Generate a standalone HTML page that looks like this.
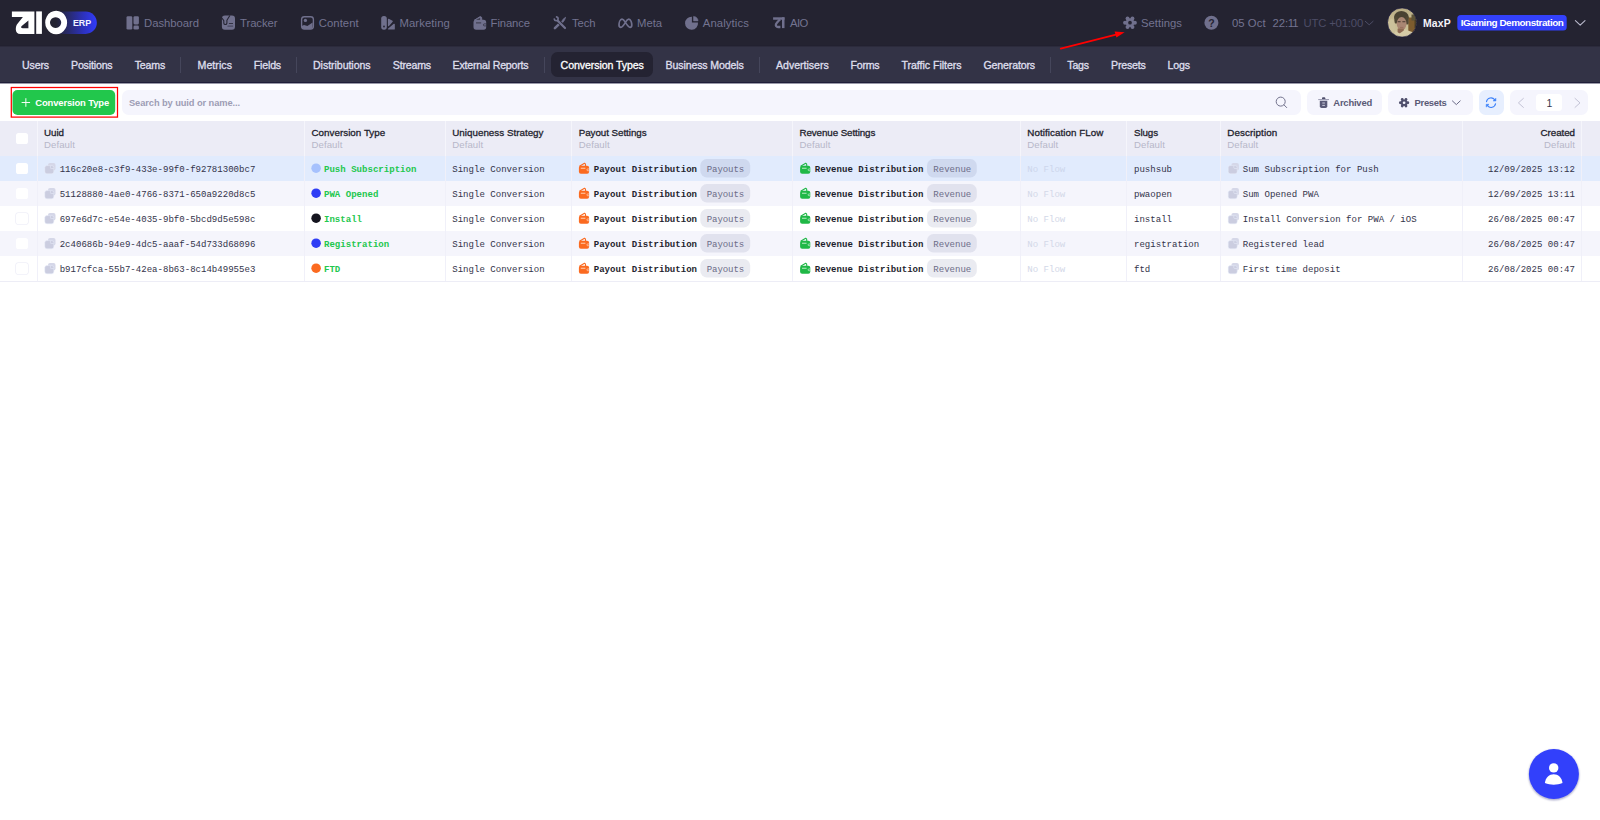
<!DOCTYPE html>
<html lang="en">
<head>
<meta charset="utf-8">
<title>Conversion Types</title>
<style>
*{box-sizing:border-box;margin:0;padding:0}
html,body{width:1600px;height:820px;overflow:hidden;background:#fff}
body{position:relative;font-family:"Liberation Sans",sans-serif;color:#1f1f2e}
svg{position:absolute;overflow:visible}
.t{position:absolute;white-space:pre;z-index:6}
.q{position:absolute;left:1208.3px;top:17.2px;font:bold 10.5px "Liberation Sans",sans-serif;color:#242331;z-index:7;line-height:12px}
#top{position:absolute;left:0;top:0;width:1600px;height:46px;background:#242331}
#sub{position:absolute;left:0;top:45px;width:1600px;height:39px;background:linear-gradient(#222130 0,#222130 1px,#2c2b3c 1px,#2c2b3c 2px,#333346 2px,#333346 37px,#1f1e38 37px,#1f1e38 38px,#9a9aa8 38px,#9a9aa8 39px)}
#sub i{position:absolute;top:12px;width:1px;height:16px;background:#45465b}
#sub b{position:absolute;left:551px;top:7px;width:102px;height:25px;border-radius:6.5px;background:#242332}
.pill{position:absolute;top:90.2px;height:24.7px;border-radius:6.5px;background:#f5f5fd}
#thead{position:absolute;left:0;top:121px;width:1600px;height:35px;background:#ececf6}
.row{position:absolute;left:0;width:1600px;height:25px}
.vs{position:absolute;top:121px;width:1.2px;height:35px;background:#f5f5fb;z-index:2}
.vb{position:absolute;top:156px;width:1.2px;height:125px;background:#f0f0f9;z-index:2}
.cb{position:absolute;left:16.4px;width:11.2px;height:11.1px;border-radius:2.6px;background:#fff;z-index:2}
.cbw{box-shadow:0 0 0 0.8px #efeff8}
.n{font:normal 11.3px "Liberation Sans",sans-serif;color:#737390}
.nb{font:bold 10.4px "Liberation Sans",sans-serif;}
.bd{font:bold 9.9px "Liberation Sans",sans-serif;}
.erp{font:bold 8.9px "Liberation Sans",sans-serif;}
.s{font:normal 10.6px "Liberation Sans",sans-serif;color:#dedeec;-webkit-text-stroke:0.33px #dedeec}
.hl{font:normal 9.8px "Liberation Sans",sans-serif;color:#1f1f2e;-webkit-text-stroke:0.3px #1f1f2e}
.hd{font:normal 9.6px "Liberation Sans",sans-serif;color:#b7b7c9}
.b{font:bold 9.45px "Liberation Sans",sans-serif;}
.ph{font:bold 9.3px "Liberation Sans",sans-serif;}
.pg{font:normal 10.5px "Liberation Sans",sans-serif;}
.m{font:normal 9.05px "Liberation Mono",monospace;color:#33334a}
.mb{font:bold 9.05px "Liberation Mono",monospace;}
</style>
</head>
<body>
<div id="top"></div>
<div id="sub"><b></b><i style="left:180px"></i><i style="left:295.8px"></i><i style="left:544.1px"></i><i style="left:759.2px"></i><i style="left:1050.2px"></i></div>
<div class="pill" style="left:122.3px;width:1178.7px"></div>
<div class="pill" style="left:1307.3px;width:74.4px"></div>
<div class="pill" style="left:1388px;width:84.5px"></div>
<div class="pill" style="left:1479px;width:24.9px;background:#e7effe"></div>
<div class="pill" style="left:1510.2px;width:78.1px"></div>
<div style="position:absolute;left:1535.7px;top:94.1px;width:26.6px;height:16.8px;border-radius:3.5px;background:#fff"></div>
<div id="thead"></div>
<div class="row" style="top:156px;background:#e1ebfd"></div>
<div class="row" style="top:181px;background:#f5f5fc"></div>
<div class="row" style="top:206px;background:#fff"></div>
<div class="row" style="top:231px;background:#f5f5fc"></div>
<div class="row" style="top:256px;background:#fff;box-shadow:0 1px 0 #ededf6"></div>
<div class="vs" style="left:36.5px"></div><div class="vb" style="left:36.5px"></div>
<div class="vs" style="left:304.2px"></div><div class="vb" style="left:304.2px"></div>
<div class="vs" style="left:444.9px"></div><div class="vb" style="left:444.9px"></div>
<div class="vs" style="left:571.2px"></div><div class="vb" style="left:571.2px"></div>
<div class="vs" style="left:792px"></div><div class="vb" style="left:792px"></div>
<div class="vs" style="left:1019.8px"></div><div class="vb" style="left:1019.8px"></div>
<div class="vs" style="left:1126.3px"></div><div class="vb" style="left:1126.3px"></div>
<div class="vs" style="left:1219.8px"></div><div class="vb" style="left:1219.8px"></div>
<div class="vs" style="left:1461.6px"></div><div class="vb" style="left:1461.6px"></div>
<div class="vs" style="left:1580.8px"></div><div class="vb" style="left:1580.8px"></div>
<div class="cb" style="top:133.4px"></div>
<div class="cb" style="top:162.6px"></div>
<div class="cb" style="top:187.6px"></div>
<div class="cb cbw" style="top:212.6px"></div>
<div class="cb" style="top:237.6px"></div>
<div class="cb cbw" style="top:262.6px"></div>
<svg style="left:0;top:0" width="110" height="46" viewBox="0 0 110 46"><defs><linearGradient id="lg" x1="0" x2="1"><stop offset="0" stop-color="#242331"/><stop offset=".3" stop-color="#282a6c"/><stop offset=".65" stop-color="#2c31b8"/><stop offset="1" stop-color="#313bfa"/></linearGradient></defs><path d="M56,11.4H85.6a11.25,11.25 0 0 1 0,22.5H56Z" fill="url(#lg)"/><path transform="translate(11.9,11.4)" d="M0,0H22.5V22.5H8.5C5.5,22.5 3.9,20.5 3.9,18C3.9,15.5 4.3,13.8 5.8,12L11,5.7H0ZM16.5,9V16.8H11C9,16.8 8.8,15.6 9.8,14.6Z" fill="#fff" fill-rule="evenodd"/><rect x="36.2" y="11.4" width="5.7" height="22.5" fill="#fff"/><path fill-rule="evenodd" fill="#fff" d="M56.15,10.8a10.95,11.7 0 1 0 .01,0ZM55.6,17.3a5.6,5.3 0 1 0 .01,0Z"/></svg>
<svg style="left:0;top:0;z-index:5" width="1600" height="60" viewBox="0 0 1600 60"><rect x="126.5" y="16.2" width="5.8" height="13.3" rx="1.3" fill="#70708d"/><rect x="133.5" y="16.2" width="5.4" height="8.2" rx="1.3" fill="#70708d"/><rect x="133.5" y="25.6" width="5.4" height="3.9" rx="1.3" fill="#70708d"/><rect x="221.9" y="15.5" width="13.1" height="14.2" rx="3" fill="#70708d"/><path d="M229.9,15.4L226.9,20.3V23.1Q226.8,24.5 225.4,24.5Q223.9,24.5 223.8,23.1V20.6L221.7,17.7" fill="none" stroke="#242331" stroke-width="1.05" stroke-linejoin="round"/><path d="M229.3,23.5H232.6" stroke="#242331" stroke-width="0.8" stroke-linecap="round"/><path d="M228,26.2H232.6" stroke="#4a4a62" stroke-width="1.3" stroke-linecap="round"/><rect x="301.6" y="16.7" width="11.8" height="12.4" rx="2.8" fill="none" stroke="#70708d" stroke-width="1.35"/><circle cx="305.4" cy="20.4" r="1.65" fill="#70708d"/><path d="M301.8,26L304,25L307.4,26L312.6,22.6V27Q312.6,29 310.6,29H304Q301.8,29 301.8,27Z" fill="#70708d"/><rect x="381.2" y="16" width="5.6" height="13.7" rx="2.6" fill="#70708d"/><circle cx="384" cy="26.5" r="0.9" fill="#242331"/><path d="M388.5,19.4L392.2,21.3L388.5,25.6Z" fill="#70708d" stroke="#70708d" stroke-width="1.2" stroke-linejoin="round"/><path d="M388.6,29L394.2,24.3V29Z" fill="#70708d" stroke="#70708d" stroke-width="1.2" stroke-linejoin="round"/><rect x="473.5" y="19.8" width="12.7" height="9.9" rx="2.6" fill="#70708d"/><path d="M474.3,20.2L480.2,16.6L481.6,17.3L481.8,20.2Z" fill="#70708d" stroke="#70708d" stroke-width="1" stroke-linejoin="round"/><path d="M476,19.7L480.1,18.1V19.7Z" fill="#242331" opacity=".85"/><path d="M476.4,22.9H480.8" stroke="#242331" stroke-width="1" stroke-linecap="round" opacity=".75"/><path d="M486.2,23.9H484.4a1,1 0 0 0 0,2H486.2" fill="none" stroke="#242331" stroke-width="0.8" opacity=".8"/><path d="M554.9,28.2L558.8,24.3" stroke="#70708d" stroke-width="2.5" stroke-linecap="round"/><path d="M557.6,20.6L565,28" stroke="#242331" stroke-width="3.6" stroke-linecap="round"/><path d="M557.6,20.6L565,28" stroke="#70708d" stroke-width="2.2" stroke-linecap="round"/><path d="M556.6,16.9A1.95,1.95 0 1 1 554.3,19.2" fill="none" stroke="#70708d" stroke-width="1.7" stroke-linecap="round"/><path d="M561.7,21.4Q562.6,19 565.6,17.3Q565.1,19.8 562.7,22.4Z" fill="#70708d" stroke="#70708d" stroke-width="0.8" stroke-linejoin="round"/><path d="M625.4,22.4C624.3,20.5 623.3,19.1 622,19.2C620,19.4 619,22.8 619,25C619,26.5 619.8,27.3 620.9,27.3C622.5,27.3 623.8,25.2 625.4,22.4C626.5,20.4 627.5,19.2 628.8,19.2C630.8,19.2 631.8,22.8 631.8,25C631.8,26.5 631.2,27.3 630.1,27.3C628.5,27.3 627,25 625.4,22.4Z" fill="none" stroke="#70708d" stroke-width="1.7" stroke-linejoin="round"/><path d="M691.9,16.75A6.5,6.5 0 1 0 698,22.5L691.9,22.5Z" fill="#70708d"/><path d="M693.5,16.4A4.6,4.6 0 0 1 698.1,20.9L693.5,20.9Z" fill="#70708d" stroke="#70708d" stroke-width="0.5" stroke-linejoin="round"/><rect x="773.1" y="17.3" width="11.4" height="2.45" fill="#70708d"/><rect x="782" y="17.3" width="2.5" height="10.8" fill="#70708d"/><path d="M780,19.4C778.5,21 776.6,22.6 776,24.2C775.5,25.8 776.3,27 778,27L780.4,27" fill="none" stroke="#70708d" stroke-width="2.3"/><circle cx="1130" cy="22.7" r="4.37" fill="#70708d"/><circle cx="1134.92" cy="22.70" r="1.98" fill="#70708d"/><circle cx="1132.46" cy="26.96" r="1.98" fill="#70708d"/><circle cx="1127.54" cy="26.96" r="1.98" fill="#70708d"/><circle cx="1125.08" cy="22.70" r="1.98" fill="#70708d"/><circle cx="1127.54" cy="18.44" r="1.98" fill="#70708d"/><circle cx="1132.46" cy="18.44" r="1.98" fill="#70708d"/><circle cx="1130" cy="22.7" r="1.85" fill="#242331"/><circle cx="1211.4" cy="22.8" r="7" fill="#70708d"/><path d="M1365.3,21.3L1369.2,24.8L1373.1,21.3" fill="none" stroke="#4d4d66" stroke-width="1" stroke-linecap="round" stroke-linejoin="round"/><path d="M1575.4,20.6L1580.2,25.2L1585,20.6" fill="none" stroke="#b9b9cc" stroke-width="1.1" stroke-linecap="round" stroke-linejoin="round"/><rect x="1457.3" y="14.9" width="109.4" height="15.7" rx="3.5" fill="#3341fb"/><defs><clipPath id="av"><circle cx="1402.1" cy="22.5" r="14.5"/></clipPath><filter id="bl" x="-20%" y="-20%" width="140%" height="140%"><feGaussianBlur stdDeviation="0.65"/></filter><linearGradient id="avb" x1="0" x2="0" y1="0" y2="1"><stop offset="0" stop-color="#b5a981"/><stop offset=".45" stop-color="#c7bb93"/><stop offset="1" stop-color="#cdc39d"/></linearGradient></defs><g clip-path="url(#av)"><rect x="1386" y="6" width="33" height="33" fill="url(#avb)"/><g filter="url(#bl)"><rect x="1408.3" y="17.5" width="10" height="15.5" fill="#7d5c2e"/><rect x="1411.5" y="14.5" width="6" height="6" fill="#5b5238"/><rect x="1414.5" y="20" width="3" height="8" fill="#4b4028"/><ellipse cx="1401.4" cy="17" rx="7.3" ry="6" fill="#4a4333"/><rect x="1394.4" y="16" width="3.4" height="7.5" rx="1.5" fill="#4f4634"/><rect x="1405.6" y="16" width="3" height="8.5" rx="1.5" fill="#4f4634"/><ellipse cx="1401.6" cy="23.6" rx="4.9" ry="6.6" fill="#a98673"/><rect x="1397.6" y="28.6" width="6.2" height="5" fill="#8f6b52"/><rect x="1397.6" y="21" width="3" height="1.3" fill="#5e4b40"/><rect x="1402.4" y="21" width="3" height="1.3" fill="#5e4b40"/><rect x="1400" y="26.9" width="3.4" height="1" fill="#9a6f60"/><path d="M1392,39L1395.6,31L1399.6,33.6L1405.2,29.4L1412.8,32.2L1417,39Z" fill="#d5cba6"/><ellipse cx="1391.5" cy="27" rx="3.6" ry="8" fill="#cbc19b"/></g></g><circle cx="1402.1" cy="22.5" r="14.6" fill="none" stroke="#15143a" stroke-width="0.9" opacity=".75"/><path d="M1060.7,48.6L1117,34.4" stroke="#ff0000" stroke-width="1.6" stroke-linecap="round"/><path d="M1124.6,32.2L1114.6,31.6L1116.4,37.6Z" fill="#ff0000"/></svg>
<svg style="left:0;top:84px;z-index:4" width="1600" height="36" viewBox="0 84 1600 36"><rect x="11.3" y="87.5" width="106.2" height="29.6" fill="none" stroke="#ff0000" stroke-width="1.25"/><rect x="12.5" y="90" width="102.7" height="25" rx="5" fill="#22c74c"/><path d="M22,102.5H29.7M25.85,98.6V106.4" stroke="#fff" stroke-width="0.95" stroke-linecap="round"/><circle cx="1280.7" cy="101.6" r="4.5" fill="none" stroke="#6b6b87" stroke-width="0.95"/><path d="M1284,104.9L1286.7,107.6" stroke="#6b6b87" stroke-width="0.95" stroke-linecap="round"/><path d="M1322,99.3V98.2Q1322,97.2 1323,97.2H1324.3Q1325.3,97.2 1325.3,98.2V99.3Z" fill="#4f4f6b"/><path d="M1318.6,99.6H1328.6" stroke="#9797ae" stroke-width="1" stroke-linecap="round"/><path d="M1319.8,100.7H1327.3V106.3Q1327.3,108.1 1325.5,108.1H1321.6Q1319.8,108.1 1319.8,106.3Z" fill="#5a5a77"/><path d="M1322.3,103H1324.9M1322.3,105.4H1324.9" stroke="#d9d9e8" stroke-width="0.9"/><circle cx="1404.1" cy="102.75" r="3.32" fill="#4f4f6c"/><circle cx="1407.84" cy="102.75" r="1.40" fill="#4f4f6c"/><circle cx="1405.97" cy="105.99" r="1.40" fill="#4f4f6c"/><circle cx="1402.23" cy="105.99" r="1.40" fill="#4f4f6c"/><circle cx="1400.36" cy="102.75" r="1.40" fill="#4f4f6c"/><circle cx="1402.23" cy="99.51" r="1.40" fill="#4f4f6c"/><circle cx="1405.97" cy="99.51" r="1.40" fill="#4f4f6c"/><circle cx="1404.1" cy="102.75" r="1.35" fill="#f5f5fd"/><path d="M1452.4,100.9L1456.3,104.6L1460.2,100.9" fill="none" stroke="#6b6b87" stroke-width="1" stroke-linecap="round" stroke-linejoin="round"/><path d="M1486.5,101.6A4.6,4.6 0 0 1 1494.6,99.6" fill="none" stroke="#3d82fa" stroke-width="1.1" stroke-linecap="round"/><path d="M1495.9,98.2V101H1493.1Z" fill="#3d82fa" stroke="#3d82fa" stroke-width="0.5" stroke-linejoin="round"/><path d="M1495.6,103.7A4.6,4.6 0 0 1 1487.5,105.7" fill="none" stroke="#3d82fa" stroke-width="1.1" stroke-linecap="round"/><path d="M1486.2,107.1V104.3H1489Z" fill="#3d82fa" stroke="#3d82fa" stroke-width="0.5" stroke-linejoin="round"/><path d="M1523.4,98.4L1518.4,102.9L1523.4,107.4" fill="none" stroke="#c4c4d6" stroke-width="1" stroke-linecap="round" stroke-linejoin="round"/><path d="M1575,98.4L1580,102.9L1575,107.4" fill="none" stroke="#c4c4d6" stroke-width="1" stroke-linecap="round" stroke-linejoin="round"/></svg>
<svg style="left:0;top:156px;z-index:3" width="1600" height="125" viewBox="0 156 1600 125"><g transform="translate(44.8,163.1)"><rect x="3.2" y="0" width="7.5" height="7.4" rx="2" fill="#d5d7e8"/><rect x="0" y="2.5" width="9" height="8.2" rx="2" fill="#cbcde0" stroke="#e9eefb" stroke-width="0.5"/><path d="M5.6,2.7V4.6a0.8,0.8 0 0 0 .8,.8H8.8" fill="none" stroke="#e2e5f3" stroke-width="0.7"/></g><g transform="translate(1228.2,163.1)"><rect x="3.2" y="0" width="7.5" height="7.4" rx="2" fill="#d5d7e8"/><rect x="0" y="2.5" width="9" height="8.2" rx="2" fill="#cbcde0" stroke="#e9eefb" stroke-width="0.5"/><path d="M5.6,2.7V4.6a0.8,0.8 0 0 0 .8,.8H8.8" fill="none" stroke="#e2e5f3" stroke-width="0.7"/></g><circle cx="316.1" cy="168.2" r="4.75" fill="#a6c1fd"/><rect x="700.3" y="159.1" width="49.9" height="18.3" rx="6.5" fill="rgba(95,100,150,0.13)"/><rect x="927" y="159.1" width="49.8" height="18.3" rx="6.5" fill="rgba(95,100,150,0.13)"/><g transform="translate(578.9,162.75) scale(1)"><rect x="0" y="3.1" width="10.2" height="7.8" rx="2" fill="#fb6a20"/><path d="M0.9,3.3L5.6,0.55L6.5,1.1L6.7,3.3" fill="none" stroke="#fb6a20" stroke-width="1.1" stroke-linejoin="round" stroke-linecap="round"/><path d="M2.3,5.5H6.1" stroke="#ffd9c2" stroke-width="0.9" stroke-linecap="round"/><path d="M10.2,6.2H8.9a0.9,0.9 0 0 0 0,1.8H10.2" fill="none" stroke="#ffd9c2" stroke-width="0.7"/></g><g transform="translate(800.1,162.75) scale(1)"><rect x="0" y="3.1" width="10.2" height="7.8" rx="2" fill="#1fb846"/><path d="M0.9,3.3L5.6,0.55L6.5,1.1L6.7,3.3" fill="none" stroke="#1fb846" stroke-width="1.1" stroke-linejoin="round" stroke-linecap="round"/><path d="M2.3,5.5H6.1" stroke="#c9f1d3" stroke-width="0.9" stroke-linecap="round"/><path d="M10.2,6.2H8.9a0.9,0.9 0 0 0 0,1.8H10.2" fill="none" stroke="#c9f1d3" stroke-width="0.7"/></g><g transform="translate(44.8,188.1)"><rect x="3.2" y="0" width="7.5" height="7.4" rx="2" fill="#d5d7e8"/><rect x="0" y="2.5" width="9" height="8.2" rx="2" fill="#cbcde0" stroke="#e9eefb" stroke-width="0.5"/><path d="M5.6,2.7V4.6a0.8,0.8 0 0 0 .8,.8H8.8" fill="none" stroke="#e2e5f3" stroke-width="0.7"/></g><g transform="translate(1228.2,188.1)"><rect x="3.2" y="0" width="7.5" height="7.4" rx="2" fill="#d5d7e8"/><rect x="0" y="2.5" width="9" height="8.2" rx="2" fill="#cbcde0" stroke="#e9eefb" stroke-width="0.5"/><path d="M5.6,2.7V4.6a0.8,0.8 0 0 0 .8,.8H8.8" fill="none" stroke="#e2e5f3" stroke-width="0.7"/></g><circle cx="316.1" cy="193.2" r="4.75" fill="#2f3df5"/><rect x="700.3" y="184.1" width="49.9" height="18.3" rx="6.5" fill="rgba(95,100,150,0.13)"/><rect x="927" y="184.1" width="49.8" height="18.3" rx="6.5" fill="rgba(95,100,150,0.13)"/><g transform="translate(578.9,187.75) scale(1)"><rect x="0" y="3.1" width="10.2" height="7.8" rx="2" fill="#fb6a20"/><path d="M0.9,3.3L5.6,0.55L6.5,1.1L6.7,3.3" fill="none" stroke="#fb6a20" stroke-width="1.1" stroke-linejoin="round" stroke-linecap="round"/><path d="M2.3,5.5H6.1" stroke="#ffd9c2" stroke-width="0.9" stroke-linecap="round"/><path d="M10.2,6.2H8.9a0.9,0.9 0 0 0 0,1.8H10.2" fill="none" stroke="#ffd9c2" stroke-width="0.7"/></g><g transform="translate(800.1,187.75) scale(1)"><rect x="0" y="3.1" width="10.2" height="7.8" rx="2" fill="#1fb846"/><path d="M0.9,3.3L5.6,0.55L6.5,1.1L6.7,3.3" fill="none" stroke="#1fb846" stroke-width="1.1" stroke-linejoin="round" stroke-linecap="round"/><path d="M2.3,5.5H6.1" stroke="#c9f1d3" stroke-width="0.9" stroke-linecap="round"/><path d="M10.2,6.2H8.9a0.9,0.9 0 0 0 0,1.8H10.2" fill="none" stroke="#c9f1d3" stroke-width="0.7"/></g><g transform="translate(44.8,213.1)"><rect x="3.2" y="0" width="7.5" height="7.4" rx="2" fill="#d5d7e8"/><rect x="0" y="2.5" width="9" height="8.2" rx="2" fill="#cbcde0" stroke="#e9eefb" stroke-width="0.5"/><path d="M5.6,2.7V4.6a0.8,0.8 0 0 0 .8,.8H8.8" fill="none" stroke="#e2e5f3" stroke-width="0.7"/></g><g transform="translate(1228.2,213.1)"><rect x="3.2" y="0" width="7.5" height="7.4" rx="2" fill="#d5d7e8"/><rect x="0" y="2.5" width="9" height="8.2" rx="2" fill="#cbcde0" stroke="#e9eefb" stroke-width="0.5"/><path d="M5.6,2.7V4.6a0.8,0.8 0 0 0 .8,.8H8.8" fill="none" stroke="#e2e5f3" stroke-width="0.7"/></g><circle cx="316.1" cy="218.2" r="4.75" fill="#15151f"/><rect x="700.3" y="209.1" width="49.9" height="18.3" rx="6.5" fill="rgba(95,100,150,0.13)"/><rect x="927" y="209.1" width="49.8" height="18.3" rx="6.5" fill="rgba(95,100,150,0.13)"/><g transform="translate(578.9,212.75) scale(1)"><rect x="0" y="3.1" width="10.2" height="7.8" rx="2" fill="#fb6a20"/><path d="M0.9,3.3L5.6,0.55L6.5,1.1L6.7,3.3" fill="none" stroke="#fb6a20" stroke-width="1.1" stroke-linejoin="round" stroke-linecap="round"/><path d="M2.3,5.5H6.1" stroke="#ffd9c2" stroke-width="0.9" stroke-linecap="round"/><path d="M10.2,6.2H8.9a0.9,0.9 0 0 0 0,1.8H10.2" fill="none" stroke="#ffd9c2" stroke-width="0.7"/></g><g transform="translate(800.1,212.75) scale(1)"><rect x="0" y="3.1" width="10.2" height="7.8" rx="2" fill="#1fb846"/><path d="M0.9,3.3L5.6,0.55L6.5,1.1L6.7,3.3" fill="none" stroke="#1fb846" stroke-width="1.1" stroke-linejoin="round" stroke-linecap="round"/><path d="M2.3,5.5H6.1" stroke="#c9f1d3" stroke-width="0.9" stroke-linecap="round"/><path d="M10.2,6.2H8.9a0.9,0.9 0 0 0 0,1.8H10.2" fill="none" stroke="#c9f1d3" stroke-width="0.7"/></g><g transform="translate(44.8,238.1)"><rect x="3.2" y="0" width="7.5" height="7.4" rx="2" fill="#d5d7e8"/><rect x="0" y="2.5" width="9" height="8.2" rx="2" fill="#cbcde0" stroke="#e9eefb" stroke-width="0.5"/><path d="M5.6,2.7V4.6a0.8,0.8 0 0 0 .8,.8H8.8" fill="none" stroke="#e2e5f3" stroke-width="0.7"/></g><g transform="translate(1228.2,238.1)"><rect x="3.2" y="0" width="7.5" height="7.4" rx="2" fill="#d5d7e8"/><rect x="0" y="2.5" width="9" height="8.2" rx="2" fill="#cbcde0" stroke="#e9eefb" stroke-width="0.5"/><path d="M5.6,2.7V4.6a0.8,0.8 0 0 0 .8,.8H8.8" fill="none" stroke="#e2e5f3" stroke-width="0.7"/></g><circle cx="316.1" cy="243.2" r="4.75" fill="#2f3df5"/><rect x="700.3" y="234.1" width="49.9" height="18.3" rx="6.5" fill="rgba(95,100,150,0.13)"/><rect x="927" y="234.1" width="49.8" height="18.3" rx="6.5" fill="rgba(95,100,150,0.13)"/><g transform="translate(578.9,237.75) scale(1)"><rect x="0" y="3.1" width="10.2" height="7.8" rx="2" fill="#fb6a20"/><path d="M0.9,3.3L5.6,0.55L6.5,1.1L6.7,3.3" fill="none" stroke="#fb6a20" stroke-width="1.1" stroke-linejoin="round" stroke-linecap="round"/><path d="M2.3,5.5H6.1" stroke="#ffd9c2" stroke-width="0.9" stroke-linecap="round"/><path d="M10.2,6.2H8.9a0.9,0.9 0 0 0 0,1.8H10.2" fill="none" stroke="#ffd9c2" stroke-width="0.7"/></g><g transform="translate(800.1,237.75) scale(1)"><rect x="0" y="3.1" width="10.2" height="7.8" rx="2" fill="#1fb846"/><path d="M0.9,3.3L5.6,0.55L6.5,1.1L6.7,3.3" fill="none" stroke="#1fb846" stroke-width="1.1" stroke-linejoin="round" stroke-linecap="round"/><path d="M2.3,5.5H6.1" stroke="#c9f1d3" stroke-width="0.9" stroke-linecap="round"/><path d="M10.2,6.2H8.9a0.9,0.9 0 0 0 0,1.8H10.2" fill="none" stroke="#c9f1d3" stroke-width="0.7"/></g><g transform="translate(44.8,263.1)"><rect x="3.2" y="0" width="7.5" height="7.4" rx="2" fill="#d5d7e8"/><rect x="0" y="2.5" width="9" height="8.2" rx="2" fill="#cbcde0" stroke="#e9eefb" stroke-width="0.5"/><path d="M5.6,2.7V4.6a0.8,0.8 0 0 0 .8,.8H8.8" fill="none" stroke="#e2e5f3" stroke-width="0.7"/></g><g transform="translate(1228.2,263.1)"><rect x="3.2" y="0" width="7.5" height="7.4" rx="2" fill="#d5d7e8"/><rect x="0" y="2.5" width="9" height="8.2" rx="2" fill="#cbcde0" stroke="#e9eefb" stroke-width="0.5"/><path d="M5.6,2.7V4.6a0.8,0.8 0 0 0 .8,.8H8.8" fill="none" stroke="#e2e5f3" stroke-width="0.7"/></g><circle cx="316.1" cy="268.2" r="4.75" fill="#fb6a20"/><rect x="700.3" y="259.1" width="49.9" height="18.3" rx="6.5" fill="rgba(95,100,150,0.13)"/><rect x="927" y="259.1" width="49.8" height="18.3" rx="6.5" fill="rgba(95,100,150,0.13)"/><g transform="translate(578.9,262.75) scale(1)"><rect x="0" y="3.1" width="10.2" height="7.8" rx="2" fill="#fb6a20"/><path d="M0.9,3.3L5.6,0.55L6.5,1.1L6.7,3.3" fill="none" stroke="#fb6a20" stroke-width="1.1" stroke-linejoin="round" stroke-linecap="round"/><path d="M2.3,5.5H6.1" stroke="#ffd9c2" stroke-width="0.9" stroke-linecap="round"/><path d="M10.2,6.2H8.9a0.9,0.9 0 0 0 0,1.8H10.2" fill="none" stroke="#ffd9c2" stroke-width="0.7"/></g><g transform="translate(800.1,262.75) scale(1)"><rect x="0" y="3.1" width="10.2" height="7.8" rx="2" fill="#1fb846"/><path d="M0.9,3.3L5.6,0.55L6.5,1.1L6.7,3.3" fill="none" stroke="#1fb846" stroke-width="1.1" stroke-linejoin="round" stroke-linecap="round"/><path d="M2.3,5.5H6.1" stroke="#c9f1d3" stroke-width="0.9" stroke-linecap="round"/><path d="M10.2,6.2H8.9a0.9,0.9 0 0 0 0,1.8H10.2" fill="none" stroke="#c9f1d3" stroke-width="0.7"/></g></svg>
<svg style="left:1520px;top:740px" width="70" height="70" viewBox="1520 740 70 70"><defs><filter id="sh" x="-30%" y="-30%" width="160%" height="160%"><feDropShadow dx="0" dy="1" stdDeviation="1.2" flood-color="#1a1a60" flood-opacity=".45"/></filter></defs><circle cx="1553.9" cy="774" r="25" fill="#3340fb" filter="url(#sh)"/><circle cx="1553.7" cy="767.9" r="4.7" fill="#fff"/><path d="M1544.9,783C1545.6,777.2 1549.3,774.3 1553.7,774.3C1558.1,774.3 1561.8,777.2 1562.5,783C1557,785.3 1550.4,785.3 1544.9,783Z" fill="#fff"/></svg>
<span class="q">?</span>
<span class="t n" style="left:144.00px;top:17.00px;letter-spacing:-0.030px;">Dashboard</span>
<span class="t n" style="left:240.00px;top:17.00px;letter-spacing:-0.054px;">Tracker</span>
<span class="t n" style="left:318.75px;top:17.00px;letter-spacing:0.060px;">Content</span>
<span class="t n" style="left:399.40px;top:17.00px;letter-spacing:0.110px;">Marketing</span>
<span class="t n" style="left:490.60px;top:17.00px;letter-spacing:-0.115px;">Finance</span>
<span class="t n" style="left:572.00px;top:17.00px;letter-spacing:-0.069px;">Tech</span>
<span class="t n" style="left:637.00px;top:17.00px;letter-spacing:-0.031px;">Meta</span>
<span class="t n" style="left:702.75px;top:17.00px;letter-spacing:0.115px;">Analytics</span>
<span class="t n" style="left:790.00px;top:17.00px;letter-spacing:-0.573px;">AIO</span>
<span class="t n" style="left:1141.00px;top:17.00px;letter-spacing:0.021px;">Settings</span>
<span class="t n" style="left:1232.00px;top:17.00px;letter-spacing:0.053px;">05 Oct</span>
<span class="t n" style="left:1272.50px;top:17.00px;">22:<span style="position:absolute;left:15.3px;top:0;letter-spacing:-1.067px;">11</span></span>
<span class="t n" style="left:1303.50px;top:17.00px;letter-spacing:-0.173px;color:#4d4d66">UTC +01:00</span>
<span class="t nb" style="left:1423.00px;top:18.00px;letter-spacing:0.161px;color:#f4f4fa">MaxP</span>
<span class="t bd" style="left:1460.70px;top:17.00px;letter-spacing:-0.440px;color:#fff">IGaming Demonstration</span>
<span class="t erp" style="left:72.90px;top:18.00px;letter-spacing:-0.017px;color:#f2f2ff">ERP</span>
<span class="t s" style="left:22.00px;top:59.00px;letter-spacing:-0.134px;">Users</span>
<span class="t s" style="left:71.00px;top:59.00px;letter-spacing:-0.167px;">Positions</span>
<span class="t s" style="left:134.75px;top:59.00px;letter-spacing:-0.191px;">Teams</span>
<span class="t s" style="left:197.50px;top:59.00px;letter-spacing:0.051px;">Metrics</span>
<span class="t s" style="left:253.75px;top:59.00px;letter-spacing:-0.169px;">Fields</span>
<span class="t s" style="left:313.00px;top:59.00px;letter-spacing:-0.054px;">Distributions</span>
<span class="t s" style="left:392.75px;top:59.00px;letter-spacing:-0.172px;">Streams</span>
<span class="t s" style="left:452.50px;top:59.00px;letter-spacing:-0.182px;">External Reports</span>
<span class="t s" style="left:665.60px;top:59.00px;letter-spacing:-0.130px;">Business Models</span>
<span class="t s" style="left:776.00px;top:59.00px;letter-spacing:-0.021px;">Advertisers</span>
<span class="t s" style="left:850.60px;top:59.00px;letter-spacing:-0.243px;">Forms</span>
<span class="t s" style="left:901.50px;top:59.00px;letter-spacing:-0.042px;">Traffic Filters</span>
<span class="t s" style="left:983.50px;top:59.00px;letter-spacing:-0.150px;">Generators</span>
<span class="t s" style="left:1067.25px;top:59.00px;letter-spacing:-0.160px;">Tags</span>
<span class="t s" style="left:1111.00px;top:59.00px;letter-spacing:-0.189px;">Presets</span>
<span class="t s" style="left:1167.50px;top:59.00px;letter-spacing:-0.121px;">Logs</span>
<span class="t s" style="left:560.60px;top:59.00px;letter-spacing:-0.091px;color:#fff;-webkit-text-stroke:0.3px #fff">Conversion Types</span>
<span class="t b" style="left:35.25px;top:97.00px;letter-spacing:-0.142px;color:#fff">Conversion Type</span>
<span class="t ph" style="left:129.00px;top:98.00px;letter-spacing:-0.086px;color:#9d9db5">Search by uuid or name...</span>
<span class="t b" style="left:1333.30px;top:97.00px;letter-spacing:-0.211px;color:#5a5a76">Archived</span>
<span class="t b" style="left:1414.60px;top:97.00px;letter-spacing:-0.316px;color:#5a5a76">Presets</span>
<span class="t pg" style="left:1546.40px;top:97.00px;color:#33334a">1</span>
<span class="t hl" style="left:44.00px;top:127.00px;letter-spacing:-0.039px;">Uuid</span>
<span class="t hd" style="left:44.00px;top:139.00px;letter-spacing:0.085px;">Default</span>
<span class="t hl" style="left:311.50px;top:127.00px;letter-spacing:0.027px;">Conversion Type</span>
<span class="t hd" style="left:311.50px;top:139.00px;letter-spacing:0.085px;">Default</span>
<span class="t hl" style="left:452.25px;top:127.00px;letter-spacing:0.016px;">Uniqueness Strategy</span>
<span class="t hd" style="left:452.25px;top:139.00px;letter-spacing:0.085px;">Default</span>
<span class="t hl" style="left:578.75px;top:127.00px;letter-spacing:-0.058px;">Payout Settings</span>
<span class="t hd" style="left:578.75px;top:139.00px;letter-spacing:0.085px;">Default</span>
<span class="t hl" style="left:799.50px;top:127.00px;letter-spacing:-0.100px;">Revenue Settings</span>
<span class="t hd" style="left:799.50px;top:139.00px;letter-spacing:0.085px;">Default</span>
<span class="t hl" style="left:1027.30px;top:127.00px;letter-spacing:0.061px;">Notification FLow</span>
<span class="t hd" style="left:1027.30px;top:139.00px;letter-spacing:0.085px;">Default</span>
<span class="t hl" style="left:1134.00px;top:127.00px;letter-spacing:-0.103px;">Slugs</span>
<span class="t hd" style="left:1134.00px;top:139.00px;letter-spacing:0.085px;">Default</span>
<span class="t hl" style="left:1227.30px;top:127.00px;letter-spacing:0.085px;">Description</span>
<span class="t hd" style="left:1227.30px;top:139.00px;letter-spacing:0.085px;">Default</span>
<span class="t hl" style="left:1540.60px;top:127.00px;letter-spacing:-0.066px;">Created</span>
<span class="t hd" style="left:1544.00px;top:139.00px;letter-spacing:0.085px;">Default</span>
<span class="t m" style="left:59.70px;top:164.00px;letter-spacing:0.006px;">116c20e8-c3f9-433e-99f0-f92781300bc7</span>
<span class="t mb" style="left:324.00px;top:164.00px;letter-spacing:0.006px;color:#22c74d">Push Subscription</span>
<span class="t m" style="left:452.25px;top:164.00px;letter-spacing:0.006px;">Single Conversion</span>
<span class="t mb" style="left:593.75px;top:164.00px;letter-spacing:0.006px;color:#1f1f2e">Payout Distribution</span>
<span class="t m" style="left:706.70px;top:164.00px;letter-spacing:-0.071px;color:#6c6c88">Payouts</span>
<span class="t mb" style="left:814.80px;top:164.00px;letter-spacing:0.005px;color:#1f1f2e">Revenue Distribution</span>
<span class="t m" style="left:933.30px;top:164.00px;letter-spacing:-0.011px;color:#6c6c88">Revenue</span>
<span class="t m" style="left:1027.30px;top:164.00px;color:#cdd6ec">No Flow</span>
<span class="t m" style="left:1134.00px;top:164.00px;">pushsub</span>
<span class="t m" style="left:1242.75px;top:164.00px;letter-spacing:0.006px;">Sum Subscription for Push</span>
<span class="t m" style="left:1488.04px;top:164.00px;letter-spacing:0.005px;">12/09/2025 13:12</span>
<span class="t m" style="left:59.70px;top:189.00px;letter-spacing:0.006px;">51128880-4ae0-4766-8371-650a9220d8c5</span>
<span class="t mb" style="left:324.00px;top:189.00px;letter-spacing:0.005px;color:#22c74d">PWA Opened</span>
<span class="t m" style="left:452.25px;top:189.00px;letter-spacing:0.006px;">Single Conversion</span>
<span class="t mb" style="left:593.75px;top:189.00px;letter-spacing:0.006px;color:#1f1f2e">Payout Distribution</span>
<span class="t m" style="left:706.70px;top:189.00px;letter-spacing:-0.071px;color:#6c6c88">Payouts</span>
<span class="t mb" style="left:814.80px;top:189.00px;letter-spacing:0.005px;color:#1f1f2e">Revenue Distribution</span>
<span class="t m" style="left:933.30px;top:189.00px;letter-spacing:-0.011px;color:#6c6c88">Revenue</span>
<span class="t m" style="left:1027.30px;top:189.00px;color:#d3d8e8">No Flow</span>
<span class="t m" style="left:1134.00px;top:189.00px;">pwaopen</span>
<span class="t m" style="left:1242.75px;top:189.00px;letter-spacing:0.005px;">Sum Opened PWA</span>
<span class="t m" style="left:1488.04px;top:189.00px;letter-spacing:0.005px;">12/09/2025 13:11</span>
<span class="t m" style="left:59.70px;top:214.00px;letter-spacing:0.006px;">697e6d7c-e54e-4035-9bf0-5bcd9d5e598c</span>
<span class="t mb" style="left:324.00px;top:214.00px;color:#22c74d">Install</span>
<span class="t m" style="left:452.25px;top:214.00px;letter-spacing:0.006px;">Single Conversion</span>
<span class="t mb" style="left:593.75px;top:214.00px;letter-spacing:0.006px;color:#1f1f2e">Payout Distribution</span>
<span class="t m" style="left:706.70px;top:214.00px;letter-spacing:-0.071px;color:#6c6c88">Payouts</span>
<span class="t mb" style="left:814.80px;top:214.00px;letter-spacing:0.005px;color:#1f1f2e">Revenue Distribution</span>
<span class="t m" style="left:933.30px;top:214.00px;letter-spacing:-0.011px;color:#6c6c88">Revenue</span>
<span class="t m" style="left:1027.30px;top:214.00px;color:#d3d8e8">No Flow</span>
<span class="t m" style="left:1134.00px;top:214.00px;">install</span>
<span class="t m" style="left:1242.75px;top:214.00px;letter-spacing:0.006px;">Install Conversion for PWA / iOS</span>
<span class="t m" style="left:1488.04px;top:214.00px;letter-spacing:0.005px;">26/08/2025 00:47</span>
<span class="t m" style="left:59.70px;top:239.00px;letter-spacing:0.006px;">2c40686b-94e9-4dc5-aaaf-54d733d68096</span>
<span class="t mb" style="left:324.00px;top:239.00px;letter-spacing:0.005px;color:#22c74d">Registration</span>
<span class="t m" style="left:452.25px;top:239.00px;letter-spacing:0.006px;">Single Conversion</span>
<span class="t mb" style="left:593.75px;top:239.00px;letter-spacing:0.006px;color:#1f1f2e">Payout Distribution</span>
<span class="t m" style="left:706.70px;top:239.00px;letter-spacing:-0.071px;color:#6c6c88">Payouts</span>
<span class="t mb" style="left:814.80px;top:239.00px;letter-spacing:0.005px;color:#1f1f2e">Revenue Distribution</span>
<span class="t m" style="left:933.30px;top:239.00px;letter-spacing:-0.011px;color:#6c6c88">Revenue</span>
<span class="t m" style="left:1027.30px;top:239.00px;color:#d3d8e8">No Flow</span>
<span class="t m" style="left:1134.00px;top:239.00px;letter-spacing:0.005px;">registration</span>
<span class="t m" style="left:1242.75px;top:239.00px;letter-spacing:0.006px;">Registered lead</span>
<span class="t m" style="left:1488.04px;top:239.00px;letter-spacing:0.005px;">26/08/2025 00:47</span>
<span class="t m" style="left:59.70px;top:264.00px;letter-spacing:0.006px;">b917cfca-55b7-42ea-8b63-8c14b49955e3</span>
<span class="t mb" style="left:324.00px;top:264.00px;color:#22c74d">FTD</span>
<span class="t m" style="left:452.25px;top:264.00px;letter-spacing:0.006px;">Single Conversion</span>
<span class="t mb" style="left:593.75px;top:264.00px;letter-spacing:0.006px;color:#1f1f2e">Payout Distribution</span>
<span class="t m" style="left:706.70px;top:264.00px;letter-spacing:-0.071px;color:#6c6c88">Payouts</span>
<span class="t mb" style="left:814.80px;top:264.00px;letter-spacing:0.005px;color:#1f1f2e">Revenue Distribution</span>
<span class="t m" style="left:933.30px;top:264.00px;letter-spacing:-0.011px;color:#6c6c88">Revenue</span>
<span class="t m" style="left:1027.30px;top:264.00px;color:#d3d8e8">No Flow</span>
<span class="t m" style="left:1134.00px;top:264.00px;">ftd</span>
<span class="t m" style="left:1242.75px;top:264.00px;letter-spacing:0.005px;">First time deposit</span>
<span class="t m" style="left:1488.04px;top:264.00px;letter-spacing:0.005px;">26/08/2025 00:47</span>
</body>
</html>
